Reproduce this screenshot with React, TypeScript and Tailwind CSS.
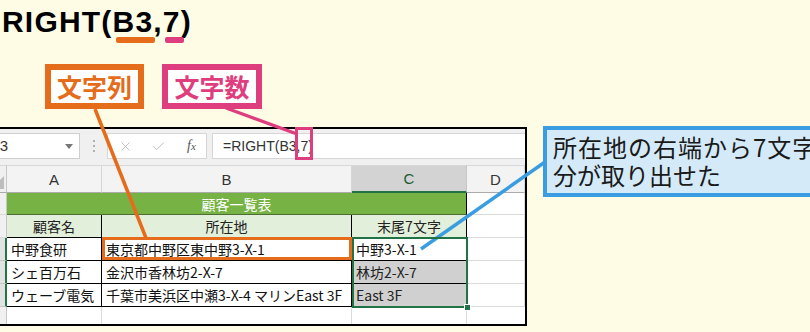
import React from "react";
import { X, Check } from "lucide-react";

function Cell({ className = "", children }: { className?: string; children?: React.ReactNode }) {
  return (
    <div className={"flex items-center overflow-hidden whitespace-nowrap text-[14px] leading-none " + className}>
      {children}
    </div>
  );
}

const rowHead = "bg-[#f0f0f0] border-r border-r-[#c6c6c6] border-b border-b-[#dadada]";
const rowHeadSel = "bg-[#e2e2e2] border-r-2 border-r-[#217346] border-b border-b-[#c6c6c6]";
const colHead =
  "justify-center bg-[#f3f3f3] border-t border-t-[#d8d8d8] border-r border-r-[#d6d6d6] border-b border-b-[#ababab] font-['Liberation_Sans',Arial,sans-serif] text-[15px] text-[#333]";
const tCell = "bg-white border-r border-r-black border-b border-b-black pl-[4px] text-[#111]";
const hCell = "justify-center bg-[#e2efda] border-r border-r-black border-b border-b-black text-[#222]";
const gCell = "bg-white border-r border-r-[#dadada] border-b border-b-[#dadada]";

export default function App() {
  return (
    <div className="relative w-[810px] h-[332px] overflow-hidden bg-[#fefce4] font-['Noto_Sans_CJK_JP',sans-serif]">
      {/* Title */}
      <div className="h-[64px] pl-[2px] pt-[7px]">
        <div className="font-['Liberation_Sans',Arial,sans-serif] text-[30px] font-bold leading-[30px] tracking-[1.2px] text-black whitespace-nowrap">
          RIGHT(<span className="relative">B3<span className="absolute left-[3px] right-[-2px] top-[32px] h-[6px] rounded-[2px] bg-[#e46c1a]" /></span>,<span className="relative">7<span className="absolute left-[2px] right-[-3px] top-[32px] h-[6px] rounded-[2px] bg-[#de3e7e]" /></span>)
        </div>
      </div>

      {/* Labels */}
      <div className="flex h-[45px] pl-[45px] gap-[18px]">
        <div className="w-[99px] border-[6px] border-[#e46c1a] bg-white flex items-center justify-center text-[25px] font-bold leading-none text-[#e46c1a]">
          文字列
        </div>
        <div className="w-[100px] border-[6px] border-[#de3e7e] bg-white flex items-center justify-center text-[25px] font-bold leading-none text-[#de3e7e]">
          文字数
        </div>
      </div>

      {/* Spreadsheet window */}
      <div className="mt-[18px] ml-[-24px] w-[551px] h-[199px] border-2 border-black bg-white flex flex-col">
        {/* formula bar */}
        <div className="h-[36px] shrink-0 bg-[#f0f0f0] flex items-start pt-[4px] pl-[10px]">
          <div className="w-[92px] h-[26px] bg-white border border-[#cfcfcf] flex items-center justify-between pl-0 pr-[6px] font-['Liberation_Sans',Arial,sans-serif] text-[15px] text-[#333]">
            <span>C3</span>
            <span className="w-0 h-0 border-l-[4px] border-r-[4px] border-t-[5px] border-l-transparent border-r-transparent border-t-[#777]" />
          </div>
          <div className="w-[27px] h-[26px] flex flex-col items-center justify-center gap-[3px]">
            <span className="w-[2px] h-[2px] bg-[#b0b0b0]" />
            <span className="w-[2px] h-[2px] bg-[#b0b0b0]" />
            <span className="w-[2px] h-[2px] bg-[#b0b0b0]" />
          </div>
          <div className="w-[100px] h-[26px] bg-white border border-[#d6d6d6] flex items-center pl-[10px]">
            <X size={15} strokeWidth={1.4} color="#bcbcbc" />
            <Check size={15} strokeWidth={1.6} color="#bcbcbc" className="ml-[18px]" />
            <span className="ml-[21px] font-['Liberation_Serif',serif] italic text-[14px] text-[#555] leading-none">
              f<span className="text-[11px]">x</span>
            </span>
          </div>
          <div className="ml-[5px] flex-1 h-[26px] bg-white border-l border-t border-b border-[#d6d6d6] flex items-center pl-[10px] font-['Liberation_Sans',Arial,sans-serif] text-[14px] text-[#333]">
            =RIGHT(B3,7)
          </div>
        </div>

        {/* grid */}
        <div className="flex-1 grid grid-cols-[29px_95px_250px_115px_1fr] grid-rows-[28px_22px_23px_23px_23px_23px_1fr]">
          {/* column headers */}
          <div className="relative bg-[#f0f0f0] border-t border-t-[#d8d8d8] border-r border-r-[#c6c6c6] border-b border-b-[#ababab]">
            <svg className="absolute right-[2px] bottom-[3px]" width="13" height="13" viewBox="0 0 13 13">
              <polygon points="13,0 13,13 0,13" fill="#bdbdbd" />
            </svg>
          </div>
          <Cell className={colHead}>A</Cell>
          <Cell className={colHead}>B</Cell>
          <Cell className="justify-center bg-[#d3d3d3] border-t border-t-[#d8d8d8] border-r border-r-[#c6c6c6] border-b-2 border-b-[#217346] font-['Liberation_Sans',Arial,sans-serif] text-[15px] text-[#1e5a36]">
            C
          </Cell>
          <Cell className={colHead}>D</Cell>

          {/* row 1 */}
          <div className={rowHead} />
          <Cell className="col-span-3 justify-center bg-[#77b244] border-r border-r-black border-b border-b-[#4c6e33] text-white">
            顧客一覧表
          </Cell>
          <div className={gCell} />

          {/* row 2 */}
          <div className={rowHead} />
          <Cell className={hCell}>顧客名</Cell>
          <Cell className={hCell}>所在地</Cell>
          <Cell className={hCell}>末尾7文字</Cell>
          <div className={gCell} />

          {/* row 3 */}
          <div className={rowHeadSel} />
          <Cell className={tCell}>中野食研</Cell>
          <Cell className={tCell}>東京都中野区東中野3-X-1</Cell>
          <Cell className={tCell}>中野3-X-1</Cell>
          <div className={gCell} />

          {/* row 4 */}
          <div className={rowHeadSel} />
          <Cell className={tCell}>シェ百万石</Cell>
          <Cell className={tCell}>金沢市香林坊2-X-7</Cell>
          <Cell className="bg-[#d0d0d0] border-r border-r-black border-b border-b-black pl-[4px] text-[#222]">林坊2-X-7</Cell>
          <div className={gCell} />

          {/* row 5 */}
          <div className={rowHeadSel} />
          <Cell className={tCell}>ウェーブ電気</Cell>
          <Cell className={tCell}>千葉市美浜区中瀬3-X-4 マリンEast 3F</Cell>
          <Cell className="bg-[#d0d0d0] border-r border-r-black border-b border-b-black pl-[4px] text-[#222]">East 3F</Cell>
          <div className={gCell} />

          {/* row 6 */}
          <div className="bg-[#f0f0f0] border-r border-r-[#c6c6c6]" />
          <div className="bg-white border-r border-r-[#dadada]" />
          <div className="bg-white border-r border-r-[#dadada]" />
          <div className="bg-white border-r border-r-[#dadada]" />
          <div className="bg-white" />
        </div>
      </div>

      {/* Overlays: connector lines */}
      <svg className="absolute left-0 top-0 pointer-events-none" width="810" height="332" viewBox="0 0 810 332">
        <line x1="95" y1="109" x2="146" y2="238" stroke="#e46c1a" strokeWidth="3.5" />
        <line x1="226" y1="108" x2="297" y2="134" stroke="#de3e7e" strokeWidth="3.2" />
        <line x1="545" y1="162" x2="421" y2="249" stroke="#3a9de1" strokeWidth="3.5" />
      </svg>

      {/* Orange box around B3 */}
      <div className="absolute left-[102px] top-[237px] w-[250px] h-[23px] border-[3px] border-[#e46c1a]" />
      {/* Pink box around 7 in formula */}
      <div className="absolute left-[295px] top-[127px] w-[18px] h-[33px] border-[3px] border-[#de3e7e]" />
      {/* Selection C3:C5 */}
      <div className="absolute left-[352px] top-[237px] w-[116px] h-[71px] border-2 border-[#217346]" />
      <div className="absolute left-[464px] top-[304px] w-[7px] h-[7px] bg-[#217346] border border-white" />

      {/* Blue callout */}
      <div className="absolute left-[543px] top-[126px] w-[300px] h-[71px] border-[4px] border-[#3a9de1] bg-[#d5eaf8] pl-[6px] pt-[3px] text-[24px] leading-[28px] text-[#1a1a1a] whitespace-nowrap">
        <div className="tracking-[1px]">所在地の右端から7文字</div>
        <div>分が取り出せた</div>
      </div>
    </div>
  );
}
